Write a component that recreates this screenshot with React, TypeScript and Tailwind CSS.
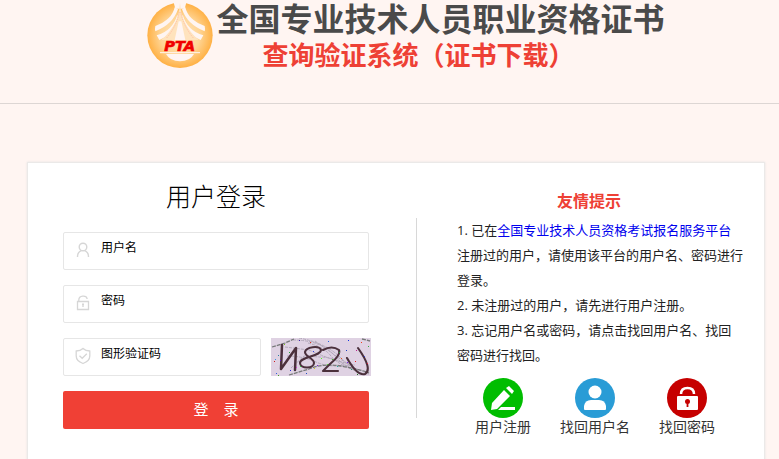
import type { ReactNode } from 'react';

function Emblem() {
  return (
    <svg viewBox="0 0 216 216" className="h-[72px] w-[72px] shrink-0" role="img" aria-label="PTA">
      <defs>
        <radialGradient id="ring" gradientUnits="userSpaceOnUse" cx="108" cy="106" r="99">
          <stop offset="0" stopColor="#ffe9c8" />
          <stop offset="0.6" stopColor="#ffd493" />
          <stop offset="1" stopColor="#ffb043" />
        </radialGradient>
      </defs>
      <circle cx="108" cy="106" r="98" fill="url(#ring)" />
      <path d="M88 4 L128 4 L122 26 H94Z" fill="#fff5f2" />
      <path d="M92 22 Q84 60 34 78 Q32 86 34 94 Q86 74 102 28Z M124 22 Q132 60 182 78 Q184 86 182 94 Q130 74 114 28Z" fill="#fff5f2" />
      <path d="M100 44 Q86 92 38 106 L46 120 Q88 102 104 60Z M116 44 Q130 92 178 106 L170 120 Q128 102 112 60Z" fill="#fff5f2" />
      <path d="M108 8 Q106 42 94 66 Q80 96 52 120 H164 Q136 96 122 66 Q110 42 108 8Z" fill="#ffe3bd" />
      <path d="M104 64 L92 120 H124 L112 64Z" fill="#fff5f2" />
      <path d="M106 36 Q98 78 68 114 M110 36 Q118 78 148 114" fill="none" stroke="#ffad9b" strokeWidth="2" strokeDasharray="4 3" />
      <path d="M48 158 H168" stroke="#fff5f2" strokeWidth="3" />
      <path d="M66 162 H150 Q138 184 108 184 Q78 184 66 162Z" fill="#fff5f2" />
      <text x="107" y="153" textAnchor="middle" fontSize="44" fontWeight="700" fontStyle="italic" fill="#f00000" stroke="#f00000" strokeWidth="2" className="font-['DejaVu_Sans',sans-serif]">PTA</text>
    </svg>
  );
}

function UserIcon() {
  return (
    <svg viewBox="0 0 16 18" className="h-[18px] w-4 shrink-0" fill="none" stroke="#d6d6d6" strokeWidth="1.4" aria-hidden="true">
      <circle cx="8" cy="6" r="3.8" />
      <path d="M2.5 16 C2.5 12.5 4 10.5 6.3 9.7 M9.7 9.7 C12 10.5 13.5 12.5 13.5 16" />
    </svg>
  );
}

function LockIcon() {
  return (
    <svg viewBox="0 0 16 18" className="h-[18px] w-4 shrink-0" fill="none" stroke="#d6d6d6" strokeWidth="1.3" aria-hidden="true">
      <path d="M2.5 7.5 H13.5 V15.5 H2.5Z M3.8 7 V6 C3.8 1.2 11.5 .8 12.2 5" />
      <path d="M8 10 V13" strokeWidth="1.4" />
      <path d="M7 10.3 H9" strokeWidth="1.6" />
    </svg>
  );
}

function ShieldIcon() {
  return (
    <svg viewBox="0 0 16 18" className="h-[18px] w-4 shrink-0" fill="none" stroke="#d6d6d6" strokeWidth="1.3" aria-hidden="true">
      <path d="M8 1.5 Q10.5 3.8 14.8 4 V9 Q14.8 14 8 16.5 Q1.2 14 1.2 9 V4 Q5.5 3.8 8 1.5Z" />
      <path d="M4.5 8.8 L7.2 11.3 L11.8 6.8" />
    </svg>
  );
}

const specks: [number, number, string][] = [
  [3, 23, '#d01818'], [4, 21, '#3c8ee0'], [7, 17, '#2880a0'], [9, 22, '#6020d0'], [18, 14, '#20a030'],
  [39, 4, '#e03020'], [42, 13, '#3040e0'], [57, 3, '#2060e0'], [77, 2, '#1530e0'], [90, 4, '#f04020'],
  [75, 12, '#2040c0'], [68, 14, '#20a040'], [85, 12, '#c02090'], [84, 23, '#e02020'], [50, 20, '#50f020'],
  [56, 26, '#50e030'], [66, 28, '#20b0a0'], [80, 31, '#20a070'], [5, 35, '#3060e0'], [7, 37, '#40a020'],
  [25, 29, '#d030d0'], [29, 28, '#30d040'], [43, 30, '#d0d020'], [76, 24, '#8020f0'], [93, 18, '#3040d0'],
  [96, 25, '#e02040'], [86, 36, '#207020'], [28, 2, '#4020b0'], [70, 20, '#e05020'], [19, 32, '#3030e0'],
  [46, 27, '#8020e0'], [61, 21, '#40c020'], [35, 35, '#2050c0'], [97, 8, '#30b040'], [13, 6, '#80c020'],
];

function Captcha() {
  return (
    <svg viewBox="0 0 100 38" className="h-[38px] w-[100px] shrink-0 bg-[#dfd2e3]" role="img" aria-label="图形验证码">
      <g fill="none" stroke="#b3a9ba" strokeWidth="1" strokeDasharray="3 1">
        <path d="M22 2 Q50 2 64 18 T98 36 M28 0 Q55 5 70 20 T98 33 M14 9 L38 12 Q62 23 84 27 M44 3 L82 30 M37 5 Q53 9 60 18 T83 31" />
        <path d="M20 30 L33 18 L49 19 Q64 19 77 29 M16 18 Q32 18 45 24 T79 27" />
      </g>
      <path d="M1 9 L14 5 L23 1 M18 37 L38 31 Q52 25 70 28 T98 35 M91 1 L99 3" fill="none" stroke="#777979" strokeWidth="1.3" strokeDasharray="4 1" />
      <g fill="none" stroke="#4b303c" strokeWidth="2.1" strokeLinecap="round" strokeLinejoin="round">
        <path d="M11 7 L10 31 L25 10 L24 32" strokeWidth="2.5" />
        <path d="M50 12 C48 7 35 9 34 14 C34 19 43 20 43 25 C43 31 29 31 29 25 C29 19 50 18 50 12" />
        <path d="M52 12 Q61 7 68 12 Q70 17 59 26 L52 33 L67 33" />
        <path d="M76 20 Q86 38 94 36 Q102 31 87 10" />
      </g>
      {specks.map(([x, y, color]) => <rect key={`${x}-${y}`} x={x} y={y} width="1" height="1" fill={color} />)}
    </svg>
  );
}

function Field({ label, icon, type = 'text' }: { label: string; icon: ReactNode; type?: string }) {
  return (
    <label className="flex h-[38px] w-full min-w-0 items-center gap-2.5 rounded-[2px] border border-[#e6e6e6] bg-white pb-1 pl-[11px]">
      <span className="pt-0.5">{icon}</span>
      <input type={type} placeholder={label} aria-label={label} className="h-full min-w-0 flex-1 bg-transparent pb-1 text-xs text-black outline-none placeholder:text-black placeholder:opacity-100" />
    </label>
  );
}

function Shortcut({ label, color, children }: { label: string; color: string; children: ReactNode }) {
  return (
    <a href="#" className="flex w-[92px] flex-col items-center text-sm leading-[18px] text-[#333]">
      <svg viewBox="0 0 40 40" className="h-10 w-10" aria-hidden="true">
        <circle cx="20" cy="20" r="20" fill={color} />
        {children}
      </svg>
      {label}
    </a>
  );
}

export default function App() {
  return (
    <div className="min-h-screen bg-[#fff5f2] font-['Open_Sans','Noto_Sans_CJK_SC',sans-serif]">
      <header className="flex h-[104px] justify-center border-b border-[#ddd6d4] pl-[30px]">
        <Emblem />
        <h1 className="whitespace-nowrap font-['Liberation_Sans','Noto_Sans_CJK_SC',sans-serif] font-bold">
          <span className="block text-[32px] leading-10 text-[#4a4a4a]">全国专业技术人员职业资格证书</span>
          <span className="block pl-[46px] text-[26px] leading-8 text-[#ee4035]">查询验证系统（证书下载）</span>
        </h1>
      </header>

      <main className="ml-[27px] mr-[14px] mt-[58px] flex min-h-[310px] border border-[#ebe9e8] bg-white shadow-[0_0_2px_#e2e2e2]">
        <form className="flex flex-1 flex-col pl-[35px] pt-[13px]" onSubmit={(e) => e.preventDefault()}>
          <div className="flex w-[306px] flex-col gap-[15px]">
            <h2 className="h-[41px] text-center text-[25px] font-light leading-10 text-black">用户登录</h2>
            <Field label="用户名" icon={<UserIcon />} />
            <Field label="密码" icon={<LockIcon />} type="password" />
            <div className="flex gap-2.5">
              <div className="w-[198px] shrink-0">
                <Field label="图形验证码" icon={<ShieldIcon />} />
              </div>
              <Captcha />
            </div>
            <button type="submit" className="h-[38px] rounded-[2px] bg-[#f04035] pb-0.5 text-[15px] text-white">登　录</button>
          </div>
        </form>

        <div className="mt-[55px] h-[200px] w-px shrink-0 bg-[#d8d8d8]" />

        <section className="w-[347px] shrink-0 pl-10 pr-5 pt-[25px]">
          <h2 className="w-[264px] text-center text-base font-bold leading-[26px] text-[#ee4035]">友情提示</h2>
          <div className="mt-1 text-[13px] leading-[25px] text-[#222]">
            <p>1. 已在<a href="#" className="text-[#0000ee]">全国专业技术人员资格考试报名服务平台</a>注册过的用户，请使用该平台的用户名、密码进行登录。</p>
            <p>2. 未注册过的用户，请先进行用户注册。</p>
            <p>3. 忘记用户名或密码，请点击找回用户名、找回密码进行找回。</p>
          </div>
          <nav className="mt-[10px] flex">
            <Shortcut label="用户注册" color="#00bd00">
              <path d="M8 32 L9 25 L21 12 L27 18 L14 31Z M23 10 L26 8 L31 13 L29 16Z M18 29 H32 V32 H15Z" fill="#fff" />
            </Shortcut>
            <Shortcut label="找回用户名" color="#299cd6">
              <circle cx="20" cy="14" r="6.5" fill="#fff" />
              <path d="M9 31 V28 Q10 22 16 22 H24 Q30 22 31 28 V31 Q31 32 30 32 H10 Q9 32 9 31Z" fill="#fff" />
            </Shortcut>
            <Shortcut label="找回密码" color="#c60000">
              <path d="M14 16 Q14 10 20.5 10 Q27 10 27 16" fill="none" stroke="#fff" strokeWidth="2.5" />
              <rect x="10" y="18" width="21" height="14" rx="1" fill="#fff" />
              <circle cx="20.5" cy="23.5" r="2.5" fill="#c60000" />
              <path d="M20.5 24 V29" stroke="#c60000" strokeWidth="1.8" />
            </Shortcut>
          </nav>
        </section>
      </main>
    </div>
  );
}
